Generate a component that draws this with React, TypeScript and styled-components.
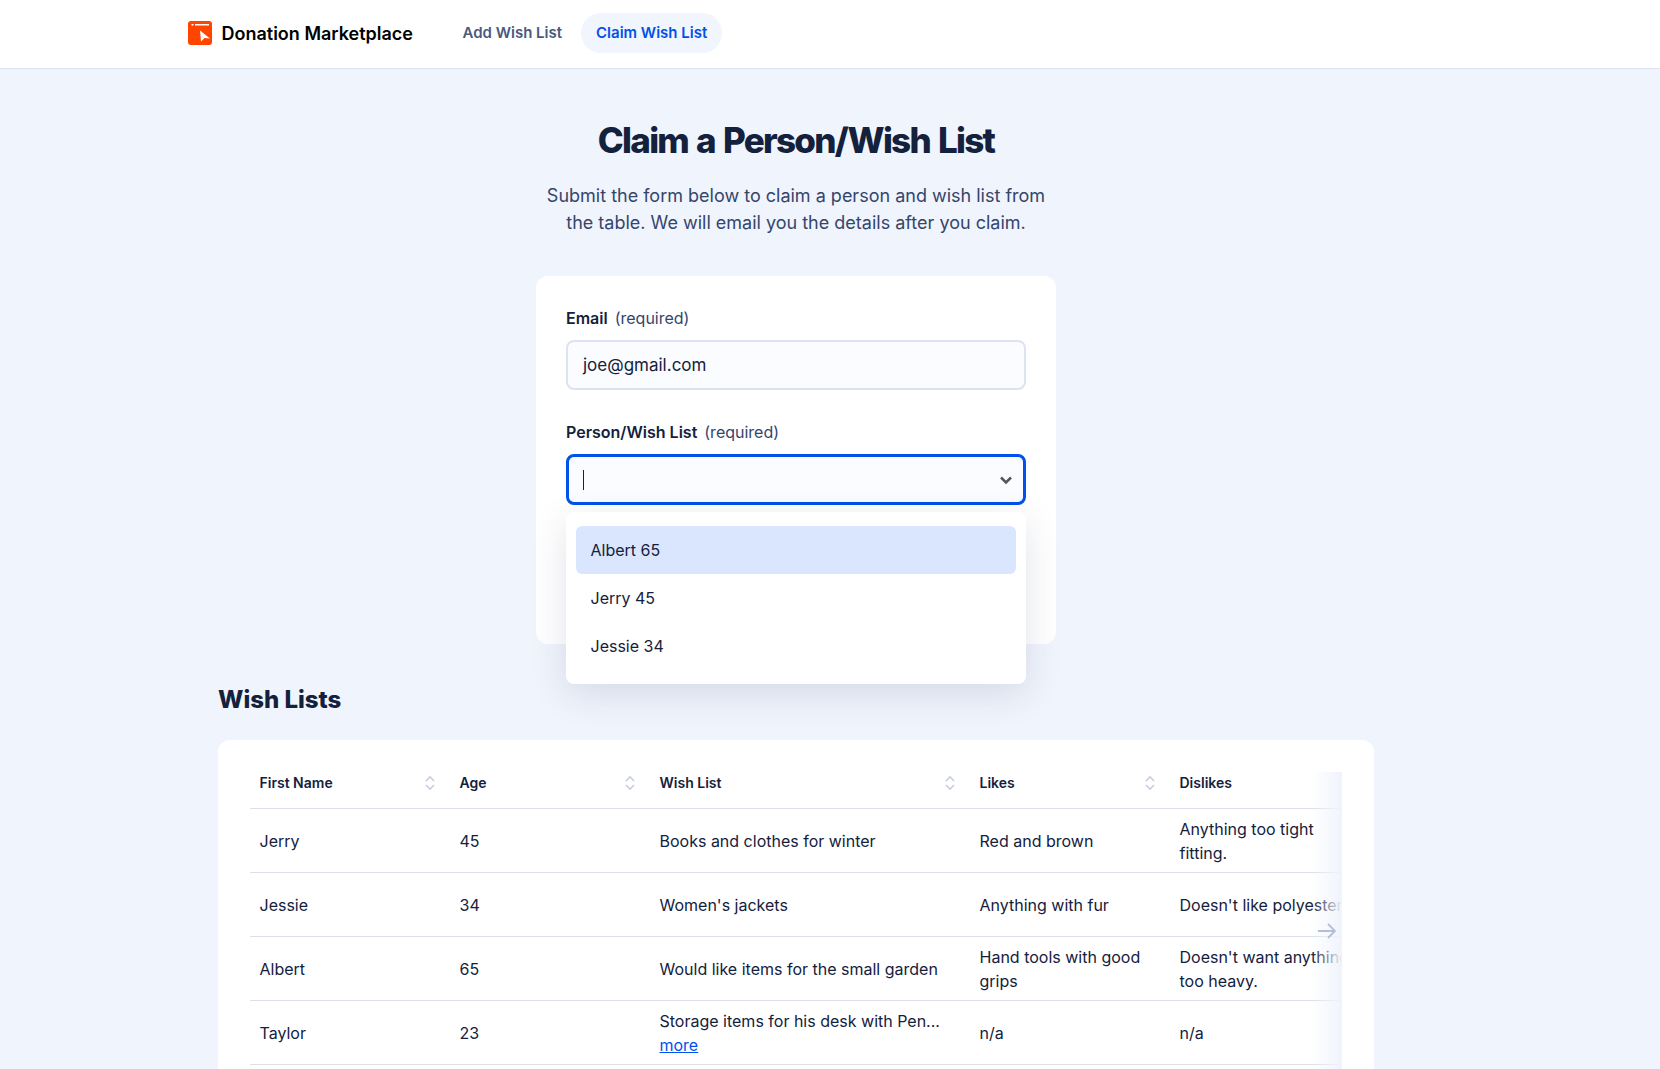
import styled, { createGlobalStyle } from "styled-components";

const GlobalStyle = createGlobalStyle`
  html, body {
    margin: 0;
    padding: 0;
    height: 100%;
    overflow: hidden;
    background-color: #f0f4fc;
  }
  body {
    font-family: Inter, "Noto Sans", sans-serif;
    color: #14213d;
  }
  * {
    box-sizing: border-box;
  }
`;

const Page = styled.div`
  height: 1069px;
  overflow: hidden;
`;

const Header = styled.header`
  height: 69px;
  background-color: #fff;
  border-bottom: 1px solid #dde3f0;
  padding: 13px 0 0 188px;
  display: flex;
  align-items: flex-start;
`;

const Brand = styled.div`
  display: flex;
  align-items: center;
  gap: 9.5px;
  height: 40px;
  margin-right: 34.5px;
  font-size: 18px;
  font-weight: 600;
  color: #000;
`;

const NavItem = styled.a<{ $active?: boolean }>`
  display: flex;
  align-items: center;
  height: 40px;
  padding: 0 15px 2px;
  border-radius: 20px;
  font-size: 15px;
  font-weight: 600;
  margin-right: 4px;
  color: ${(props) => (props.$active ? "#0052ea" : "#4a5a7d")};
  background-color: ${(props) => (props.$active ? "#f0f5fe" : "transparent")};
`;

const Main = styled.main`
  width: 1592px;
  display: flex;
  flex-direction: column;
  align-items: center;
  padding-top: 49px;
`;

const Title = styled.h1`
  margin: 0;
  font-size: 35px;
  line-height: 44px;
  font-weight: 800;
  letter-spacing: -1.7px;
  word-spacing: 2px;
  color: #14213d;
`;

const Subtitle = styled.p`
  margin: 20px 0 0;
  width: 520px;
  text-align: center;
  font-size: 18px;
  line-height: 27px;
  color: #35456c;
`;

const FormCard = styled.form`
  position: relative;
  width: 520px;
  height: 368px;
  margin-top: 40px;
  padding: 30px;
  background-color: #fff;
  border-radius: 12px;
`;

const Field = styled.div`
  margin-bottom: 30px;
`;

const Label = styled.label`
  display: flex;
  gap: 7px;
  height: 24px;
  align-items: center;
  margin-bottom: 10px;
  font-size: 16px;
  font-weight: 600;
  color: #14213d;
`;

const Hint = styled.span`
  font-weight: 400;
  color: #35456c;
`;

const Input = styled.div<{ $focused?: boolean }>`
  position: relative;
  display: flex;
  align-items: center;
  height: ${(props) => (props.$focused ? "51px" : "50px")};
  padding: ${(props) => (props.$focused ? "0 14px" : "0 15px")};
  border: ${(props) =>
    props.$focused ? "3px solid #0052ea" : "2px solid #dde3f0"};
  border-radius: 8px;
  background-color: #fbfcff;
  font-size: 17px;
  color: #14213d;
`;

const Caret = styled.span`
  width: 1px;
  height: 20px;
  background-color: #14213d;
`;

const Chevron = styled.svg`
  position: absolute;
  right: 10px;
  top: 50%;
  transform: translateY(-50%);
`;

const Dropdown = styled.ul`
  position: absolute;
  left: 30px;
  top: 236px;
  width: 460px;
  margin: 0;
  padding: 14px 10px;
  list-style: none;
  background-color: #fff;
  border-radius: 8px;
  box-shadow: 0 10px 36px rgba(30, 45, 85, 0.13);
`;

const Option = styled.li<{ $active?: boolean }>`
  display: flex;
  align-items: center;
  height: 48px;
  padding: 0 14.5px;
  border-radius: 6px;
  font-size: 16px;
  color: #14213d;
  background-color: ${(props) => (props.$active ? "#d9e6fd" : "transparent")};
`;

const Section = styled.section`
  width: 1156px;
  margin-top: 40px;
`;

const SectionTitle = styled.h2`
  margin: 0 0 24px;
  font-size: 24px;
  line-height: 32px;
  font-weight: 800;
  color: #14213d;
`;

const TableCard = styled.div`
  padding: 32px;
  background-color: #fff;
  border-radius: 12px;
`;

const TableWrap = styled.div`
  position: relative;
  overflow: hidden;
  padding-bottom: 40px;
`;

const Table = styled.table`
  width: 1120px;
  table-layout: fixed;
  border-collapse: collapse;
`;

const HeadCell = styled.th<{ $width: number }>`
  width: ${(props) => props.$width}px;
  height: 36px;
  padding: 1px 10px 15px 9.5px;
  text-align: left;
  vertical-align: top;
  font-size: 14px;
  line-height: 20px;
  font-weight: 600;
  color: #14213d;
  border-bottom: 1px solid #dde0e6;
`;

const HeadInner = styled.div`
  display: flex;
  align-items: center;
  justify-content: space-between;
  padding-right: 4px;
`;

const Row = styled.tr`
  height: 64px;
  border-bottom: 1px solid #dde0e6;
`;

const Cell = styled.td`
  padding: 0 10px 0 9.5px;
  font-size: 16px;
  line-height: 24px;
  color: #14213d;
`;

const More = styled.a`
  display: block;
  color: #0052ea;
  text-decoration: underline;
`;

const Fade = styled.div`
  position: absolute;
  top: 0;
  right: 0;
  bottom: 0;
  width: 30px;
  background: linear-gradient(to right, rgba(239, 243, 251, 0), #eff3fb);
`;

const ScrollArrow = styled.svg`
  position: absolute;
  right: 6px;
  top: 151px;
`;

function Logo() {
  return (
    <svg width="24" height="24" viewBox="0 0 24 24">
      <rect width="24" height="24" rx="3" fill="#ff4500" />
      <rect x="3.5" y="3" width="2" height="1.5" fill="#fff" />
      <rect x="7" y="3" width="14" height="1.5" fill="#fff" />
      <path d="M12 9.5 22 17.5 16.5 17 13 20.5Z" fill="#fff" />
    </svg>
  );
}

function SortIcon() {
  return (
    <svg width="12" height="16" viewBox="0 0 12 16" fill="none" stroke="#c2cbdf" strokeWidth="1.5">
      <path d="M2 6 6 1.8 10 6" />
      <path d="M2 10 6 14.2 10 10" />
    </svg>
  );
}

const columns = [
  { label: "First Name", width: 200, sortable: true },
  { label: "Age", width: 200, sortable: true },
  { label: "Wish List", width: 320, sortable: true },
  { label: "Likes", width: 200, sortable: true },
  { label: "Dislikes", width: 200, sortable: false },
];

const rows = [
  ["Jerry", "45", "Books and clothes for winter", "Red and brown", "Anything too tight fitting."],
  ["Jessie", "34", "Women's jackets", "Anything with fur", "Doesn't like polyester"],
  ["Albert", "65", "Would like items for the small garden", "Hand tools with good grips", "Doesn't want anything too heavy."],
];

function App() {
  return (
    <Page>
      <GlobalStyle />
      <Header>
        <Brand>
          <Logo />
          Donation Marketplace
        </Brand>
        <NavItem>Add Wish List</NavItem>
        <NavItem $active>Claim Wish List</NavItem>
      </Header>
      <Main>
        <Title>Claim a Person/Wish List</Title>
        <Subtitle>
          Submit the form below to claim a person and wish list from the table.
          We will email you the details after you claim.
        </Subtitle>
        <FormCard>
          <Field>
            <Label>
              Email <Hint>(required)</Hint>
            </Label>
            <Input>joe@gmail.com</Input>
          </Field>
          <Field>
            <Label>
              Person/Wish List <Hint>(required)</Hint>
            </Label>
            <Input $focused>
              <Caret />
              <Chevron width="14" height="10" viewBox="0 0 14 10" fill="none" stroke="#555" strokeWidth="2.5">
                <path d="M2 2.5 7 7.5 12 2.5" />
              </Chevron>
            </Input>
          </Field>
          <Dropdown>
            <Option $active>Albert 65</Option>
            <Option>Jerry 45</Option>
            <Option>Jessie 34</Option>
          </Dropdown>
        </FormCard>
        <Section>
          <SectionTitle>Wish Lists</SectionTitle>
          <TableCard>
            <TableWrap>
              <Table>
                <thead>
                  <tr>
                    {columns.map((col) => (
                      <HeadCell key={col.label} $width={col.width}>
                        <HeadInner>
                          {col.label}
                          {col.sortable && <SortIcon />}
                        </HeadInner>
                      </HeadCell>
                    ))}
                  </tr>
                </thead>
                <tbody>
                  {rows.map((row) => (
                    <Row key={row[0]}>
                      {row.map((value, i) => (
                        <Cell key={i}>{value}</Cell>
                      ))}
                    </Row>
                  ))}
                  <Row>
                    <Cell>Taylor</Cell>
                    <Cell>23</Cell>
                    <Cell>
                      Storage items for his desk with Pen...
                      <More>more</More>
                    </Cell>
                    <Cell>n/a</Cell>
                    <Cell>n/a</Cell>
                  </Row>
                </tbody>
              </Table>
              <Fade />
              <ScrollArrow width="18" height="16" viewBox="0 0 18 16" fill="none" stroke="#b4bfd6" strokeWidth="1.8">
                <path d="M0 8H17M10 1 17 8 10 15" />
              </ScrollArrow>
            </TableWrap>
          </TableCard>
        </Section>
      </Main>
    </Page>
  );
}

export default App;
